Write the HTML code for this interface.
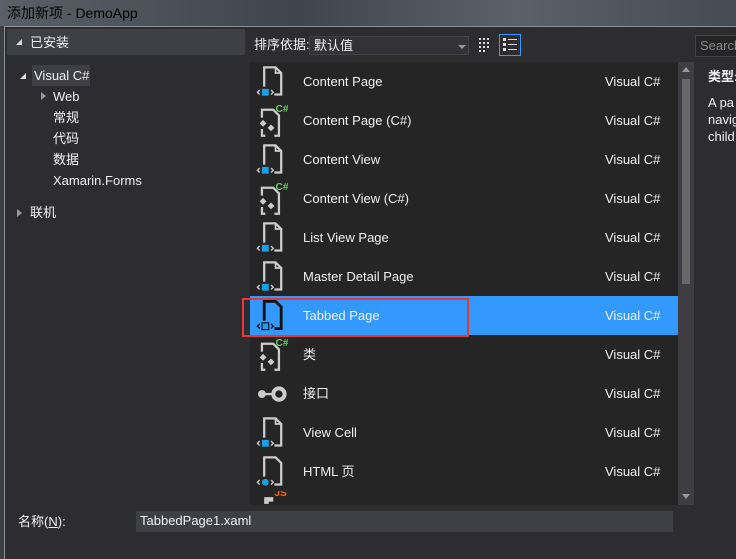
<!DOCTYPE html>
<html><head><meta charset="utf-8"><style>
*{margin:0;padding:0;box-sizing:border-box}
body{width:736px;height:559px;overflow:hidden;background:#3a3f44;font-family:"Liberation Sans","Noto Sans CJK SC",sans-serif;font-size:13px;line-height:16px;color:#f1f1f1;position:relative}
.title{position:absolute;left:0;top:0;width:736px;height:26px;background:linear-gradient(90deg,#596067,#3e454c 40%,#5a6169 70%,#444b52);color:#000;font-size:14px;padding:5px 0 0 7px}
.win{position:absolute;left:4px;top:26px;width:732px;height:533px;background:#2d2d30;border-top:1px solid #8a9096;border-left:1px solid #8a9096}
.a{position:absolute;white-space:nowrap}
.row{position:absolute;left:250px;width:428px;height:39px}
.row .n{position:absolute;left:53px;top:12px;line-height:16px}
.row .v{position:absolute;left:355px;top:12px;line-height:16px}
.row svg{position:absolute;left:4px;top:3px}
</style></head><body>
<div class="title">添加新项 - DemoApp</div>
<div class="win"></div>
<div class="a" style="left:7px;top:29px;width:238px;height:26px;background:#3f3f46"></div>
<div class="a" style="left:16px;top:39px;width:0;height:0;border-left:6px solid transparent;border-bottom:6px solid #ddd"></div>
<div class="a" style="left:30px;top:35px">已安装</div>
<div class="a" style="left:32px;top:65px;width:58px;height:21px;background:#3f3f46"></div>
<div class="a" style="left:20px;top:73px;width:0;height:0;border-left:6px solid transparent;border-bottom:6px solid #ddd"></div>
<div class="a" style="left:34px;top:68px">Visual C#</div>
<div class="a" style="left:41px;top:92px;width:0;height:0;border-top:4px solid transparent;border-bottom:4px solid transparent;border-left:5px solid #999"></div>
<div class="a" style="left:53px;top:89px">Web</div>
<div class="a" style="left:53px;top:110px">常规</div>
<div class="a" style="left:53px;top:131px">代码</div>
<div class="a" style="left:53px;top:152px">数据</div>
<div class="a" style="left:53px;top:173px">Xamarin.Forms</div>
<div class="a" style="left:17px;top:209px;width:0;height:0;border-top:4px solid transparent;border-bottom:4px solid transparent;border-left:5px solid #999"></div>
<div class="a" style="left:30px;top:205px">联机</div>

<div class="a" style="left:254px;top:37px">排序依据:</div>
<div class="a" style="left:309px;top:36px;width:160px;height:19px;background:#333337;border:1px solid #434346;padding:1px 0 0 4px">默认值</div>
<div class="a" style="left:458px;top:45px;border-left:4px solid transparent;border-right:4px solid transparent;border-top:4px solid #999"></div>
<svg class="a" style="left:478px;top:37px" width="16" height="16"><g fill="#ddd"><rect x="1" y="1" width="2" height="2"/><rect x="5" y="1" width="2" height="2"/><rect x="9" y="1" width="2" height="2"/><rect x="1" y="5" width="2" height="2"/><rect x="5" y="5" width="2" height="2"/><rect x="9" y="5" width="2" height="2"/><rect x="1" y="9" width="2" height="2"/><rect x="5" y="9" width="2" height="2"/><rect x="9" y="9" width="2" height="2"/><rect x="1" y="13" width="2" height="2"/><rect x="5" y="13" width="2" height="2"/></g></svg>
<div class="a" style="left:499px;top:34px;width:22px;height:22px;border:1px solid #3399ff"></div>
<svg class="a" style="left:503px;top:38px" width="14" height="14"><g fill="#ddd"><rect x="0" y="0" width="3" height="3"/><rect x="5" y="1" width="9" height="1"/><rect x="0" y="5" width="3" height="3"/><rect x="5" y="6" width="9" height="1"/><rect x="0" y="10" width="3" height="3"/><rect x="5" y="11" width="9" height="1"/></g></svg>

<div class="a" style="left:695px;top:35px;width:45px;height:22px;background:#252526;border:1px solid #434346;color:#888;padding:2px 0 0 4px">Search</div>
<div class="a" style="left:708px;top:69px;font-weight:bold">类型:</div>
<div class="a" style="left:708px;top:94px;line-height:17px">A pa<br>navig<br>child</div>

<div class="a" style="left:250px;top:62px;width:428px;height:443px;background:#252526"></div>
<div class="a" style="left:678px;top:62px;width:16px;height:443px;background:#3e3e42"></div>
<div class="a" style="left:682px;top:67px;border-left:4px solid transparent;border-right:4px solid transparent;border-bottom:5px solid #999"></div>
<div class="a" style="left:682px;top:79px;width:8px;height:205px;background:#686868"></div>
<div class="a" style="left:682px;top:494px;border-left:4px solid transparent;border-right:4px solid transparent;border-top:5px solid #999"></div>

<div class="row" style="top:296px;background:#3399ff"></div>

<div id="rows"></div>
<script>
var V='<svg width="34" height="33" viewBox="0 0 30 29">';
var P=V+'<path d="M9 19V2h10l5 5v19h-6" fill="none" stroke="#ccc" stroke-width="2"/><path d="M19 2v5h5" fill="none" stroke="#ccc" stroke-width="1.5"/><path d="M5 22l-2 2 2 2M15 22l2 2-2 2" fill="none" stroke="#ccc" stroke-width="1.2"/><rect x="7" y="21" width="6" height="6" fill="#1ba1e2"/></svg>';
var PS=V+'<path d="M9 19V2h10l5 5v19h-6" fill="none" stroke="#111" stroke-width="2.5"/><path d="M5 22l-2 2 2 2M15 22l2 2-2 2" fill="none" stroke="#111" stroke-width="1.2"/><rect x="7" y="21" width="6" height="6" fill="#1ba1e2" stroke="#111"/></svg>';
var H=V+'<path d="M9 19V2h10l5 5v19h-6" fill="none" stroke="#ccc" stroke-width="2"/><path d="M5 22l-2 2 2 2M15 22l2 2-2 2" fill="none" stroke="#ccc" stroke-width="1.2"/><circle cx="10" cy="24" r="3" fill="#1ba1e2"/></svg>';
var C=V+'<path d="M7 12V5h10l5 5v18h-4M7 22v6h3" fill="none" stroke="#ccc" stroke-width="2"/><path d="M5 17l3-3 3 3-3 3zM12 21l3-3 3 3-3 3z" fill="#ccc"/><text x="19" y="7" font-size="9" font-weight="bold" fill="#6c6" font-family="Liberation Sans">C#</text></svg>';
var I=V+'<circle cx="7" cy="15" r="3.5" fill="#ccc"/><rect x="9" y="14" width="8" height="2" fill="#ccc"/><circle cx="22" cy="15" r="5" fill="none" stroke="#ccc" stroke-width="3.5"/></svg>';
var J=V+'<path d="M11 14v-4h6" fill="none" stroke="#ccc" stroke-width="4"/><text x="18" y="7" font-size="9" font-weight="bold" fill="#f60" font-family="Liberation Sans">JS</text></svg>';
var d=[[P,'Content Page'],[C,'Content Page (C#)'],[P,'Content View'],[C,'Content View (C#)'],[P,'List View Page'],[P,'Master Detail Page'],[PS,'Tabbed Page'],[C,'类'],[I,'接口'],[P,'View Cell'],[H,'HTML 页']];
var s='';d.forEach(function(r,i){s+='<div class="row" style="top:'+(62+i*39)+'px">'+r[0]+'<span class="n">'+r[1]+'</span><span class="v">Visual C#</span></div>';});
s+='<div class="row" style="top:491px;height:14px;overflow:hidden"><div style="position:absolute;left:4px;top:0;width:40px;height:14px;overflow:hidden">'+J.replace('<svg','<svg style="position:absolute;left:0;top:-3px"')+'</div></div>';
document.getElementById('rows').innerHTML=s;
</script>
<div class="a" style="left:242px;top:298px;width:227px;height:39px;border:2px solid #e0393e"></div>

<div class="a" style="left:18px;top:514px">名称(<u>N</u>):</div>
<div class="a" style="left:136px;top:511px;width:537px;height:21px;background:#3f3f46;padding:2px 0 0 4px">TabbedPage1.xaml</div>
</body></html>
